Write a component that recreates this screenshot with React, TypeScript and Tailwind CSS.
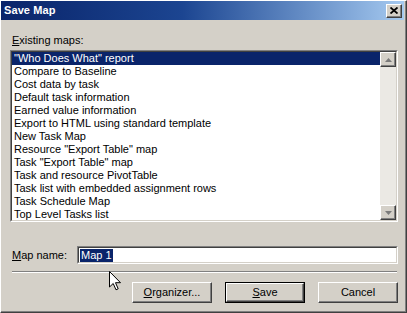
import React from 'react'

const items = [
  '"Who Does What" report',
  'Compare to Baseline',
  'Cost data by task',
  'Default task information',
  'Earned value information',
  'Export to HTML using standard template',
  'New Task Map',
  'Resource "Export Table" map',
  'Task "Export Table" map',
  'Task and resource PivotTable',
  'Task list with embedded assignment rows',
  'Task Schedule Map',
  'Top Level Tasks list',
]

// raised 3d button look (win2000)
const raised =
  'border border-t-white border-l-white border-r-[#404040] border-b-[#404040] shadow-[inset_-1px_-1px_0_#808080] bg-[#d4d0c8]'

const ScrollButton = ({ dir }: { dir: 'up' | 'down' }) => (
  <div className={`h-[15px] w-[16px] flex items-center justify-center ${raised}`}>
    <svg width="7" height="4" viewBox="0 0 7 4">
      {dir === 'up' ? (
        <path d="M3.5 0 L7 4 L0 4 Z" fill="#7a7a7a" />
      ) : (
        <path d="M0 0 L7 0 L3.5 4 Z" fill="#7a7a7a" />
      )}
    </svg>
  </div>
)

const Button = ({ children, isDefault }: { children: React.ReactNode; isDefault?: boolean }) =>
  isDefault ? (
    <div className="w-[80px] h-[21px] border border-black">
      <div className="h-full w-full flex items-center justify-center border border-t-white border-l-white border-r-[#404040] border-b-[#404040] shadow-[inset_-1px_-1px_0_#808080]">
        {children}
      </div>
    </div>
  ) : (
    <div className={`w-[80px] h-[21px] flex items-center justify-center ${raised}`}>{children}</div>
  )

export default function App() {
  return (
    <div className="relative w-[407px] h-[313px] bg-[#d4d0c8] border-l border-t border-l-white border-t-white border-r border-b border-r-[#404040] border-b-[#404040] font-['Liberation_Sans',Arial,sans-serif] text-[11px] text-black leading-[13px] overflow-hidden">
      <div className="h-full flex flex-col border-r border-b border-[#808080] pr-[1px] pb-[1px]">
        {/* title bar */}
        <div className="h-[19px] flex items-center justify-between bg-linear-to-r from-[#0a246a] via-[#1c4591] via-45% to-[#a6caf0] pl-[3px] pr-[2px]">
          <span className="text-white font-bold text-[11px] tracking-[0.1px]">Save Map</span>
          <div className={`w-[16px] h-[14px] flex items-center justify-center ${raised}`}>
            <svg width="8" height="7" viewBox="0 0 8 7">
              <path d="M0.5 0.5 L7.5 6.5 M7.5 0.5 L0.5 6.5" stroke="#000" strokeWidth="1.8" />
            </svg>
          </div>
        </div>

        {/* body */}
        <div className="flex flex-col pl-[9px] pr-[6px]">
          <div className="mt-[14px] pl-[2px] h-[13px]">
            <span className="underline underline-offset-[1px]">E</span>xisting maps:
          </div>

          {/* list box */}
          <div className="mt-[3px] h-[172px] border border-t-[#808080] border-l-[#808080] border-r-white border-b-white">
            <div className="h-full border border-t-[#404040] border-l-[#404040] border-r-[#d4d0c8] border-b-[#d4d0c8] bg-white flex overflow-hidden">
              <div className="flex-1 flex flex-col">
                {items.map((item, i) => (
                  <div
                    key={item}
                    className={`h-[13px] shrink-0 pl-[2px] whitespace-nowrap ${i === 0 ? 'bg-[#0a246a] text-white' : ''}`}
                  >
                    {item}
                  </div>
                ))}
              </div>
              <div className="w-[16px] flex flex-col justify-between bg-[#ebe9e4]">
                <ScrollButton dir="up" />
                <ScrollButton dir="down" />
              </div>
            </div>
          </div>

          {/* map name row */}
          <div className="mt-[24px] flex items-center">
            <div className="w-[67px] pl-[2px]">
              <span className="underline underline-offset-[1px]">M</span>ap name:
            </div>
            <div className="flex-1 h-[18px] border border-t-[#808080] border-l-[#808080] border-r-white border-b-white">
              <div className="h-full border border-t-[#404040] border-l-[#404040] border-r-[#d4d0c8] border-b-[#d4d0c8] bg-white flex items-center pl-[1px]">
                <span className="bg-[#0a246a] text-white px-[1px]">Map 1</span>
              </div>
            </div>
          </div>

          {/* separator */}
          <div className="mt-[7px] ml-[2px] mr-[1px] h-[2px] border-t border-t-[#808080] border-b border-b-white" />

          {/* buttons */}
          <div className="mt-[9px] flex justify-end gap-[13px]">
            <Button>
              <span>
                <span className="underline underline-offset-[1px]">O</span>rganizer...
              </span>
            </Button>
            <Button isDefault>
              <span>
                <span className="underline underline-offset-[1px]">S</span>ave
              </span>
            </Button>
            <Button>Cancel</Button>
          </div>
        </div>
      </div>

      {/* mouse pointer */}
      <svg className="absolute left-[108px] top-[270px]" width="13" height="20" viewBox="0 0 13 20">
        <path d="M0.5 0.5 L0.5 16 L4.2 12.5 L7 18.8 L9.2 17.8 L6.5 11.7 L11.5 11.7 Z" fill="#fff" stroke="#000" strokeWidth="1" strokeLinejoin="miter" />
      </svg>
    </div>
  )
}
